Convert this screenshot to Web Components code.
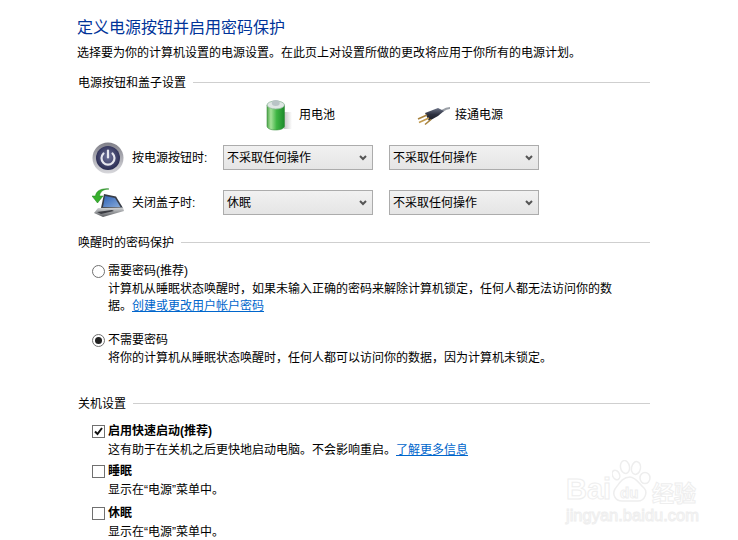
<!DOCTYPE html>
<html lang="zh-CN">
<head>
<meta charset="utf-8">
<title>系统设置</title>
<style>
    html, body { margin: 0; background: #fff; }
    body {
        height: 540px;
        overflow: hidden;
        font: 12px/17px "Liberation Sans", "Noto Sans CJK SC", sans-serif;
        color: #000;
    }
</style>
</head>
<body>
<x-page></x-page>
<script>
const ICONS = {
    battery: `<svg width="27" height="32" viewBox="0 0 27 32">
        <defs>
            <linearGradient id="g" x1="0" x2="1" y1="0" y2="0">
                <stop offset="0" stop-color="#4fa64a"/><stop offset=".22" stop-color="#a6e29a"/>
                <stop offset=".55" stop-color="#3fb544"/><stop offset="1" stop-color="#1b8a2a"/>
            </linearGradient>
            <linearGradient id="s" x1="0" x2="1" y1="0" y2="0">
                <stop offset="0" stop-color="#aaa" stop-opacity=".7"/><stop offset="1" stop-color="#aaa" stop-opacity="0"/>
            </linearGradient>
        </defs>
        <path d="M18 13h8v17H18z" fill="url(#s)"/>
        <path d="M1 6v21c0 2.500 3.500 4 8.500 4s9-1.500 9-4V6z" fill="url(#g)" stroke="#3c8f40" stroke-width=".6"/>
        <ellipse cx="9.750" cy="6" rx="8.750" ry="4" fill="#dfe6e4" stroke="#8fb79a" stroke-width=".8"/>
        <ellipse cx="9.750" cy="4" rx="4" ry="3" fill="#b9c4c6"/>
    </svg>`,
    plug: `<svg width="34" height="22" viewBox="0 0 34 22">
        <defs>
            <linearGradient id="p" x1="0" x2="0" y1="0" y2="1">
                <stop offset="0" stop-color="#6d7488"/><stop offset=".5" stop-color="#2d3140"/><stop offset="1" stop-color="#1b1d26"/>
            </linearGradient>
        </defs>
        <path d="M25 7c3-2 5-3 8-3" fill="none" stroke="#9a9fa6" stroke-width="2.200"/>
        <path d="M8 9 21 4 27 7 21 12 12 17z" fill="url(#p)"/>
        <path d="M10 11 1 15" stroke="#a8823c" stroke-width="1.600"/>
        <path d="M12 14 2 18.500" stroke="#c19a4e" stroke-width="1.600"/>
        <path d="M14 15.500 8 20.500" stroke="#a8823c" stroke-width="1.600"/>
    </svg>`,
    power: `<svg width="32" height="32" viewBox="0 0 32 32">
        <defs>
            <linearGradient id="r" x1="0" x2="0" y1="0" y2="1">
                <stop offset="0" stop-color="#7f7f88"/><stop offset=".5" stop-color="#aeaeb5"/><stop offset="1" stop-color="#d8d8dc"/>
            </linearGradient>
            <radialGradient id="c" cx=".5" cy=".45" r=".55">
                <stop offset="0" stop-color="#6d7199"/><stop offset="1" stop-color="#2a2c52"/>
            </radialGradient>
        </defs>
        <circle cx="16" cy="16" r="15.500" fill="url(#r)"/>
        <circle cx="16" cy="16" r="12" fill="url(#c)"/>
        <path d="M11.500 11.500a6.500 6.500 0 1 0 9 0" fill="none" stroke="#e6e6ee" stroke-width="2.200" stroke-linecap="round"/>
        <path d="M16 8.500v7" stroke="#e6e6ee" stroke-width="2.200" stroke-linecap="round"/>
    </svg>`,
    lid: `<svg width="33" height="30" viewBox="0 0 33 30">
        <defs>
            <linearGradient id="b" x1="0" x2="1" y1="0" y2="1">
                <stop offset="0" stop-color="#2e62b8"/><stop offset="1" stop-color="#86a9d8"/>
            </linearGradient>
            <linearGradient id="k" x1="0" x2="0" y1="0" y2="1">
                <stop offset="0" stop-color="#d6d8da"/><stop offset="1" stop-color="#5a5c60"/>
            </linearGradient>
        </defs>
        <path d="M12 6 24 8.500 31 20 9 20z" fill="#383c46"/>
        <path d="M13 8 23 10 28.500 19 11 19z" fill="url(#b)"/>
        <path d="M6 20 31 19.500 32 23 11 29 2 25z" fill="url(#k)"/>
        <path d="M5 24 20 22 22 23 9 26z" fill="#3a3c42"/>
        <path d="M17 1C11 1 8 4 7.500 8H11L5.500 15 0 8h3.500C4 3 9 0 17 1z" fill="#37b02c" stroke="#1d7d1a" stroke-width=".5"/>
    </svg>`,
};

class XPage extends HTMLElement {
    connectedCallback() {
        this.shadow = this.attachShadow({mode: 'open'});
        this.shadow.innerHTML = `
            <style>
                :host {
                    display: block;
                    position: relative;
                    height: 540px;
                    box-sizing: border-box;
                    padding: 16px 88px 0 77px;
                }
                h1 {
                    margin: 0;
                    font-size: 16px;
                    font-weight: 400;
                    line-height: 24px;
                    color: #003399;
                }
                p {
                    margin: 4px 0 0;
                    line-height: 18px;
                    white-space: nowrap;
                }
                .caption {
                    display: grid;
                    grid-template-columns: 146px 150px 16px 150px;
                    margin: 8px 0 15px 0;
                    height: 31px;
                }
                .caption div {
                    display: flex;
                    align-items: center;
                    gap: 6px;
                    grid-column: 2;
                    padding-left: 43px;
                }
                .caption div + div {
                    grid-column: 4;
                    gap: 4px;
                    padding-left: 28px;
                }
                svg { flex: none; }
                .rows {
                    display: grid;
                    grid-template-columns: 40px 91px 150px 166px;
                    row-gap: 20px;
                    margin-left: 15px;
                    align-items: center;
                }
                .rows .text { padding-top: 2px; }
                x-select + x-select { margin-left: 16px; }
                .icon { display: flex; height: 25px; align-items: center; }
                a { color: #0066cc; text-decoration: underline; }
                x-option + x-option { margin-top: 15px; }
                x-option.tight + x-option.tight { margin-top: 2px; }
            </style>
            <h1>定义电源按钮并启用密码保护</h1>
            <p>选择要为你的计算机设置的电源设置。在此页上对设置所做的更改将应用于你所有的电源计划。</p>

            <x-section label="电源按钮和盖子设置" style="margin-top:11px">
                <div class="caption">
                    <div>${ICONS.battery}<span>用电池</span></div>
                    <div>${ICONS.plug}<span>接通电源</span></div>
                </div>
                <div class="rows">
                    <span class="icon">${ICONS.power}</span>
                    <span class="text">按电源按钮时:</span>
                    <x-select>不采取任何操作</x-select>
                    <x-select>不采取任何操作</x-select>
                    <span class="icon">${ICONS.lid}</span>
                    <span class="text">关闭盖子时:</span>
                    <x-select>休眠</x-select>
                    <x-select>不采取任何操作</x-select>
                </div>
            </x-section>

            <x-section label="唤醒时的密码保护" style="margin-top:18px">
                <x-option type="radio" label="需要密码(推荐)" style="margin-top:10px">
                    <span>计算机从睡眠状态唤醒时，如果未输入正确的密码来解除计算机锁定，任何人都无法访问你的数</span><br>
                    <span>据。</span><a href="#">创建或更改用户帐户密码</a>
                </x-option>
                <x-option type="radio" checked label="不需要密码">
                    将你的计算机从睡眠状态唤醒时，任何人都可以访问你的数据，因为计算机未锁定。
                </x-option>
            </x-section>

            <x-section label="关机设置" style="margin-top:27px">
                <x-option class="tight" type="check" checked strong label="启用快速启动(推荐)" style="margin-top:9px">
                    <span>这有助于在关机之后更快地启动电脑。不会影响重启。</span><a href="#">了解更多信息</a>
                </x-option>
                <x-option class="tight" type="check" strong label="睡眠">显示在“电源”菜单中。</x-option>
                <x-option class="tight" type="check" strong label="休眠" style="margin-top:4px">显示在“电源”菜单中。</x-option>
            </x-section>

            <x-watermark></x-watermark>
        `;
    }
}
customElements.define('x-page', XPage);

class XSection extends HTMLElement {
    connectedCallback() {
        const label = this.getAttribute('label');
        this.shadow = this.attachShadow({mode: 'open'});
        this.shadow.innerHTML = `
            <style>
                :host { display: block; }
                .head {
                    display: flex;
                    align-items: center;
                    gap: 7px;
                    height: 18px;
                    padding-left: 1px;
                    white-space: nowrap;
                }
                .title { padding-top: 2px; line-height: 16px; }
                .line { flex: 1; height: 1px; background: #cfcfcf; }
            </style>
            <div class="head"><span class="title">${label}</span><span class="line"></span></div>
            <slot></slot>
        `;
    }
}
customElements.define('x-section', XSection);

class XSelect extends HTMLElement {
    connectedCallback() {
        this.shadow = this.attachShadow({mode: 'open'});
        this.shadow.innerHTML = `
            <style>
                :host {
                    display: flex;
                    align-items: center;
                    justify-content: space-between;
                    box-sizing: border-box;
                    width: 150px;
                    height: 25px;
                    padding: 0 5px 0 3px;
                    border: 1px solid #acacac;
                    background: linear-gradient(#f1f1f1, #e5e5e5);
                    white-space: nowrap;
                }
                span { padding-top: 2px; }
                svg { display: block; }
            </style>
            <span><slot></slot></span>
            <svg width="8" height="6" viewBox="0 0 8 6"><path d="M1 1l3 3 3-3" fill="none" stroke="#555" stroke-width="2"/></svg>
        `;
    }
}
customElements.define('x-select', XSelect);

class XOption extends HTMLElement {
    connectedCallback() {
        const type = this.getAttribute('type');
        const checked = this.hasAttribute('checked');
        const label = this.getAttribute('label');
        let mark;
        if (type == 'radio') {
            mark = `<svg width="13" height="13" viewBox="0 0 13 13">
                <circle cx="6.500" cy="6.500" r="6" fill="#fff" stroke="#707070"/>
                ${checked ? '<circle cx="6.500" cy="6.500" r="3.500" fill="#222"/>' : ''}
            </svg>`;
        } else {
            mark = `<svg width="13" height="13" viewBox="0 0 13 13">
                <rect x=".5" y=".5" width="12" height="12" fill="#fff" stroke="#707070"/>
                ${checked ? '<path d="M3 6.500l2.500 2.500 4.500-6" fill="none" stroke="#111" stroke-width="2"/>' : ''}
            </svg>`;
        }
        this.shadow = this.attachShadow({mode: 'open'});
        this.shadow.innerHTML = `
            <style>
                :host {
                    display: grid;
                    grid-template-columns: 13px 1fr;
                    column-gap: 3px;
                    margin-left: 15px;
                }
                .mark { display: block; height: 14px; padding-top: 4px; }
                .label { line-height: 20px; font-weight: ${this.hasAttribute('strong') ? 700 : 400}; }
                .desc { grid-column: 2; line-height: 17px; margin-top: ${type == 'check' ? 1 : 0}px; }
                svg { display: block; }
            </style>
            <span class="mark">${mark}</span>
            <span class="label">${label}</span>
            <div class="desc"><slot></slot></div>
        `;
    }
}
customElements.define('x-option', XOption);

class XWatermark extends HTMLElement {
    connectedCallback() {
        this.shadow = this.attachShadow({mode: 'open'});
        this.shadow.innerHTML = `
            <style>
                :host {
                    position: absolute;
                    left: 566px;
                    top: 460px;
                    width: 134px;
                    height: 64px;
                    color: #fff;
                    font-family: "Liberation Sans", sans-serif;
                    -webkit-text-stroke: 1px #eeeeee;
                    white-space: nowrap;
                    pointer-events: none;
                }
                span { position: absolute; }
                .bai { left: 0; top: 13px; font: 700 29px/32px "Liberation Sans", sans-serif; }
                .du { left: 54px; top: 25px; font: 700 15px/16px "Liberation Sans", sans-serif; }
                .jy { left: 86px; top: 19px; font: 700 22px/24px "Noto Sans CJK SC", sans-serif; }
                .url { left: 0; top: 46px; font: 400 16.500px/18px "Liberation Sans", sans-serif; }
                svg { position: absolute; left: 46px; top: 0; }
            </style>
            <svg width="40" height="43" viewBox="0 0 40 43" fill="#fff" stroke="#eeeeee" stroke-width="1.500">
                <ellipse cx="4" cy="15" rx="3.500" ry="5" transform="rotate(-25 4 15)"/>
                <ellipse cx="13" cy="7" rx="4.500" ry="6.500" transform="rotate(-10 13 7)"/>
                <ellipse cx="24" cy="8" rx="4.500" ry="6.500" transform="rotate(12 24 8)"/>
                <ellipse cx="33" cy="18" rx="5" ry="5.500"/>
                <path d="M18 17c6 0 9 7 14 11 4 4 1 13-6 13H10C3 41 0 34 3 29c4-5 7-12 15-12z"/>
            </svg>
            <span class="bai">Bai</span>
            <span class="du">du</span>
            <span class="jy">经验</span>
            <span class="url">jingyan.baidu.com</span>
        `;
    }
}
customElements.define('x-watermark', XWatermark);
</script>
</body>
</html>
